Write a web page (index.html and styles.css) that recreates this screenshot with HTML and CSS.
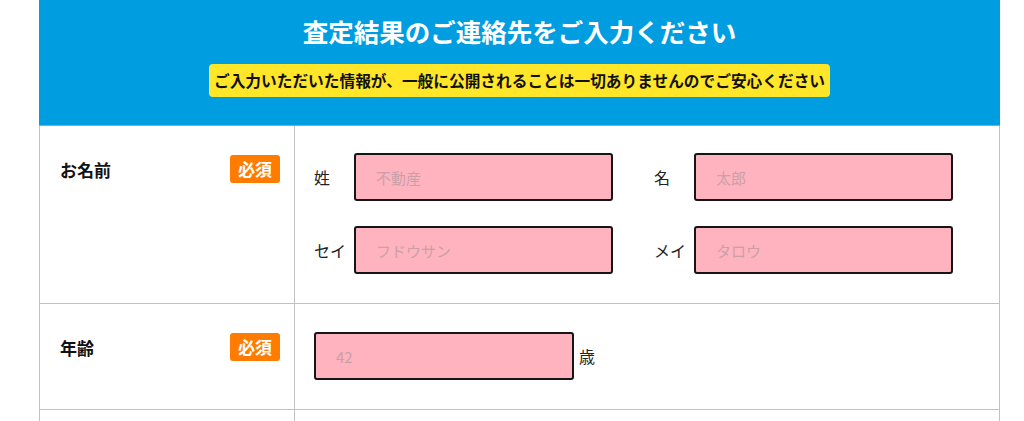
FILE: index.html
```html
<!DOCTYPE html>
<html lang="ja">
<head>
  <meta charset="UTF-8" />
  <meta name="viewport" content="width=device-width, initial-scale=1.0"/>
  <title>査定結果のご連絡先</title>
  <link rel="stylesheet" href="styles.css">
</head>
<body>

  <div class="form-wrap">
    <div class="form-head">
      <h2>査定結果のご連絡先をご入力ください</h2>
      <p class="notice"><span>ご入力いただいた情報が、一般に公開されることは一切ありませんのでご安心ください</span></p>
    </div>

    <table class="form-table">
      <tr>
        <th>
          <div class="th-inner">
            <span>お名前</span>
            <span class="required">必須</span>
          </div>
        </th>
        <td>
          <div class="name-grid">
            <div class="field">
              <label class="field-label" for="sei">姓</label>
              <input class="input" id="sei" type="text" placeholder="不動産">
            </div>
            <div class="field">
              <label class="field-label" for="mei">名</label>
              <input class="input" id="mei" type="text" placeholder="太郎">
            </div>
            <div class="field">
              <label class="field-label" for="sei-kana">セイ</label>
              <input class="input" id="sei-kana" type="text" placeholder="フドウサン">
            </div>
            <div class="field">
              <label class="field-label" for="mei-kana">メイ</label>
              <input class="input" id="mei-kana" type="text" placeholder="タロウ">
            </div>
          </div>
        </td>
      </tr>
      <tr>
        <th>
          <div class="th-inner">
            <span>年齢</span>
            <span class="required">必須</span>
          </div>
        </th>
        <td class="age-cell">
          <div class="field">
            <input class="input input-age" type="text" placeholder="42">
            <span class="unit">歳</span>
          </div>
        </td>
      </tr>
      <tr class="next-row">
        <th></th>
        <td></td>
      </tr>
    </table>
  </div>

</body>
</html>
```

FILE: styles.css
```css
body {
  margin: 0;
  font-family: 'Noto Sans CJK JP', 'Noto Sans', sans-serif;
  color: #222;
  background-color: #fff;
}
.form-wrap {
  width: 961px;
  margin-left: 39px;
}
.form-head {
  background-color: #009de0;
  border-bottom: 1px solid #56bdea;
  text-align: center;
  padding: 11px 0 28px;
}
.form-head h2 {
  margin: 0;
  color: #fff;
  font-size: 25.5px;
  line-height: 40px;
  font-weight: bold;
}
.notice {
  margin: 13px 0 0;
}
.notice span {
  display: inline-block;
  background-color: #ffe629;
  color: #111;
  font-size: 15.7px;
  font-weight: bold;
  line-height: 33px;
  padding: 0 5px;
  border-radius: 4px;
}
.form-table {
  width: 961px;
  border-collapse: collapse;
}
.form-table th,
.form-table td {
  border: 1px solid #c2c2c2;
  vertical-align: top;
  text-align: left;
}
.form-table tr:first-child th,
.form-table tr:first-child td {
  border-top: none;
}
.form-table th {
  width: 220px;
  padding: 29px 14px 0 20px;
  font-size: 17px;
  font-weight: bold;
  color: #111;
}
.th-inner {
  display: flex;
  justify-content: space-between;
  align-items: center;
}
.required {
  background-color: #ff7c00;
  color: #fff;
  font-size: 17px;
  line-height: 28px;
  padding: 0 8px;
  border-radius: 3px;
}
.form-table td {
  padding: 27px 20px 29px 19px;
}
.name-grid {
  display: grid;
  grid-template-columns: 299px 299px;
  column-gap: 41px;
  row-gap: 25px;
}
.field {
  display: flex;
  align-items: center;
}
.field-label {
  width: 40px;
  font-size: 16px;
  color: #222;
}
.input {
  box-sizing: border-box;
  width: 259px;
  height: 48px;
  border: 2px solid #151515;
  border-radius: 3px;
  background-color: #ffb3be;
  padding: 0 20px;
  font-family: inherit;
  font-size: 15px;
  color: #222;
}
.input::placeholder {
  color: #c9a0a8;
}
.form-table td.age-cell {
  padding-top: 28px;
}
.input-age {
  width: 260px;
}
.unit {
  margin-left: 5px;
  font-size: 16px;
}
.next-row th,
.next-row td {
  height: 60px;
}
```
